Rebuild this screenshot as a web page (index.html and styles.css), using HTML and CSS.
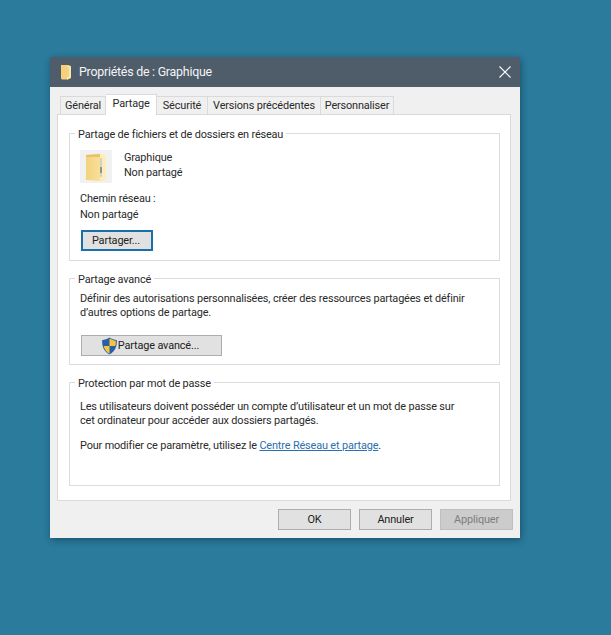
FILE: index.html
```html
<!DOCTYPE html>
<html lang="fr">
<head>
<meta charset="utf-8">
<title>Propriétés de : Graphique</title>
<link rel="stylesheet" href="styles.css">
</head>
<body>
<div class="window">
  <div class="titlebar">
    <svg class="title-icon" width="12" height="16" viewBox="0 0 12 16"><path d="M1 1h7l3 1v12l-3 1.500H2l-1-1z" fill="#f5d27a"/><path d="M7 1.500l4 1v11l-4 2z" fill="#fbe7a6"/><path d="M7.500 3h1v10h-1z" fill="#d9c48a"/></svg>
    <span class="title-text">Propriétés de : Graphique</span>
    <svg class="close" width="12" height="12" viewBox="0 0 12 12"><path d="M.5.5l11 11M11.500.5l-11 11" stroke="#fff" stroke-width="1.100" fill="none"/></svg>
  </div>
  <div class="content">
    <div class="tabs">
      <div class="tab t1">Général</div>
      <div class="tab active">Partage</div>
      <div class="tab t3">Sécurité</div>
      <div class="tab t4">Versions précédentes</div>
      <div class="tab t5">Personnaliser</div>
    </div>
    <div class="panel">
      <fieldset class="group g1">
        <legend>Partage de fichiers et de dossiers en réseau</legend>
        <div class="folder-row">
          <div class="folder-box">
            <svg width="22" height="30" viewBox="0 0 22 30"><defs><linearGradient id="fg" x1="0" y1="0" x2="1" y2="0"><stop offset="0" stop-color="#f2d27f"/><stop offset="1" stop-color="#fbe6a4"/></linearGradient></defs><path d="M1 3l14-1 6 2v24l-6 1-14-1z" fill="url(#fg)"/><path d="M1 3l14-1v3H1z" fill="#e9c268"/><path d="M15 2l6 2v24l-6 1z" fill="#fdeeb9"/><path d="M15 6h2v19h-2z" fill="#d5d2c2"/><path d="M15 15h2v6h-2z" fill="#8e9290"/></svg>
          </div>
          <div class="folder-text"><div class="fname">Graphique</div><div>Non partagé</div></div>
        </div>
        <div class="path">Chemin réseau :</div>
        <div class="path p2">Non partagé</div>
        <button class="btn share">Partager...</button>
      </fieldset>
      <fieldset class="group g2">
        <legend>Partage avancé</legend>
        <p class="desc">Définir des autorisations personnalisées, créer des ressources partagées et définir<br>d’autres options de partage.</p>
        <button class="btn advanced">
          <svg width="17" height="18" viewBox="0 0 16 17"><path d="M8 .5C10 2 12.500 2.800 15 3c0 6-1.500 10.500-7 13.500C2.500 13.500 1 9 1 3c2.500-.2 5-1 7-2.500z" fill="#2a5fa8"/><path d="M8 1.500C10 2.700 12 3.400 14 3.700c0 1.600-.1 3.200-.5 4.800H8z" fill="#f5c63a"/><path d="M8 8.500H2.500c.7 3 2.300 5.500 5.500 7.300z" fill="#f5c63a"/></svg>
          <span>Partage avancé...</span>
        </button>
      </fieldset>
      <fieldset class="group g3">
        <legend>Protection par mot de passe</legend>
        <p class="desc">Les utilisateurs doivent posséder un compte d’utilisateur et un mot de passe sur<br>cet ordinateur pour accéder aux dossiers partagés.</p>
        <p class="desc modify">Pour modifier ce paramètre, utilisez le <a href="#">Centre Réseau et partage</a>.</p>
      </fieldset>
    </div>
    <div class="actions">
      <button class="btn action">OK</button>
      <button class="btn action">Annuler</button>
      <button class="btn action disabled">Appliquer</button>
    </div>
  </div>
</div>
</body>
</html>
```
FILE: styles.css
```css
* { box-sizing: border-box; }
html, body { margin: 0; height: 100%; }
body {
  background: #2b7b9c;
  font-family: Roboto, "Open Sans", sans-serif;
  font-size: 10.9px;
  letter-spacing: -0.15px;
  color: #2a2a2a;
  padding: 57px 0 0 50px;
  overflow: hidden;
}
.window {
  width: 470px;
  height: 481px;
  background: #f0f0f0;
  box-shadow: 1px 2px 7px rgba(0, 30, 50, .45);
  display: flex;
  flex-direction: column;
}
.titlebar {
  height: 30px;
  background: #4f5d6b;
  color: #f2f4f6;
  font-size: 12.4px;
  letter-spacing: -0.24px;
  display: flex;
  align-items: center;
  padding: 0 9px 1px 10px;
}
.title-icon { margin-right: 7px; }
.title-text { flex: 1; }
.content { flex: 1; padding: 8px 9px 0 7px; display: flex; flex-direction: column; }
.tabs { display: flex; height: 19px; padding-left: 3px; position: relative; z-index: 1; }
.tab {
  height: 18px;
  margin-top: 1px;
  background: #f0f0f0;
  border: 1px solid #dadada;
  border-bottom: 0;
  border-left: 0;
  line-height: 17px;
  white-space: nowrap;
  text-align: center;
}
.t1 { border-left: 1px solid #dadada; width: 46px; }
.tab.active {
  height: 21px;
  margin-top: -1px;
  width: 51px;
  background: #fff;
  line-height: 17px;
}
.t3 { width: 51px; }
.t4 { width: 113px; }
.t5 { width: 73px; }
.panel {
  height: 387px;
  background: #fff;
  border: 1px solid #d9d9d9;
  padding: 10px 10px 0 11px;
  display: flex;
  flex-direction: column;
  gap: 9px;
}
.group {
  margin: 0;
  padding: 0 10px;
  border: 1px solid #dcdcdc;
  min-width: 0;
}
legend {
  padding: 2px 3px 0;
  margin-left: -5px;
  line-height: 15px;
}
.g1 { height: 136px; }
.g2 { height: 95px; }
.g3 { height: 112px; }
.folder-row { display: flex; height: 33px; margin-top: 8px; }
.folder-box {
  width: 32px;
  height: 33px;
  background: #f1f1f1;
  display: flex;
  align-items: center;
  justify-content: center;
}
.folder-text { margin-left: 12px; line-height: 15px; }
.path { line-height: 15px; }
.folder-row + .path { margin-top: 8px; }
.p2 { margin-top: 1px; }
.btn {
  display: block;
  font: inherit;
  letter-spacing: inherit;
  color: #222;
  background: #e1e1e1;
  border: 1px solid #adadad;
  padding: 0;
  text-align: center;
}
.share {
  width: 72px;
  height: 21px;
  margin: 8px 0 0 1px;
  border: 2px solid #1a6fa8;
  padding-right: 2px;
}
.desc { margin: 0; line-height: 14px; }
.g2 .desc { margin-top: 5px; }
.g3 .desc { margin-top: 9px; }
.g3 .modify { margin-top: 11px; }
.advanced {
  width: 141px;
  height: 21px;
  margin: 15px 0 0 1px;
  display: flex;
  align-items: center;
  justify-content: center;
  gap: 0;
  padding-right: 3px;
}
a { color: #2a6fb0; }
.actions {
  display: flex;
  justify-content: flex-end;
  gap: 8px;
  margin-top: 8px;
  margin-right: -2px;
}
.action { width: 73px; height: 21px; }
.disabled { background: #cccccc; border-color: #bfbfbf; color: #7d7d7d; }
```
